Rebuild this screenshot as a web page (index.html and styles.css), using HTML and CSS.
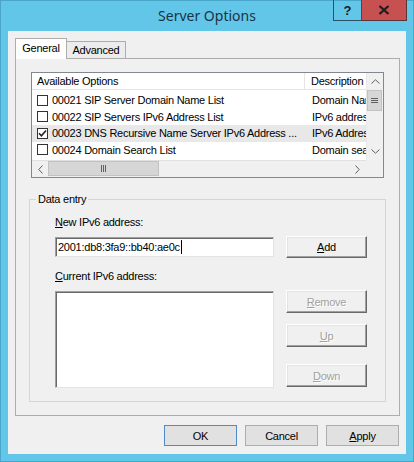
FILE: index.html
```html
<!DOCTYPE html>
<html>
<head>
<meta charset="utf-8">
<title>Server Options</title>
<link rel="stylesheet" href="styles.css">
</head>
<body>
<div class="window">
  <div class="titlebar">
    <div class="title">Server Options</div>
    <div class="controls">
      <div class="ctl help">?</div>
      <div class="ctl close">
        <svg width="12" height="10" viewBox="0 0 12 10"><path d="M1.5 1 L10.5 9 M10.5 1 L1.5 9" stroke="#1e1e1e" stroke-width="2.3" fill="none"/></svg>
      </div>
    </div>
  </div>
  <div class="client">
    <div class="tabs">
      <div class="tab active">General</div>
      <div class="tab">Advanced</div>
    </div>
    <div class="panel">
      <div class="listbox">
        <div class="list-main">
          <div class="list-view">
            <div class="header">
              <div class="hcol1">Available Options</div>
              <div class="hcol2">Description</div>
            </div>
            <div class="rows">
              <div class="row">
                <div class="c1"><span class="cb"></span><span class="txt">00021 SIP Server Domain Name List</span></div>
                <div class="c2">Domain Name List</div>
              </div>
              <div class="row">
                <div class="c1"><span class="cb"></span><span class="txt">00022 SIP Servers IPv6 Address List</span></div>
                <div class="c2">IPv6 address list</div>
              </div>
              <div class="row selected">
                <div class="c1"><span class="cb"><svg width="9" height="9" viewBox="0 0 9 9"><path d="M1 4.2 L3.4 6.8 L8 1.4" stroke="#222" stroke-width="1.6" fill="none"/></svg></span><span class="txt">00023 DNS Recursive Name Server IPv6 Address ...</span></div>
                <div class="c2">IPv6 Address list</div>
              </div>
              <div class="row">
                <div class="c1"><span class="cb"></span><span class="txt">00024 Domain Search List</span></div>
                <div class="c2">Domain search list</div>
              </div>
            </div>
          </div>
          <div class="vscroll">
            <div class="varrow">
              <svg width="9" height="5" viewBox="0 0 9 5"><path d="M0.5 4.5 L4.5 0.8 L8.5 4.5" stroke="#606060" stroke-width="1" fill="none"/></svg>
            </div>
            <div class="vthumb">
              <svg width="7" height="5" viewBox="0 0 7 5"><path d="M0 0.5 H7 M0 2.5 H7 M0 4.5 H7" stroke="#606060" stroke-width="1"/></svg>
            </div>
            <div class="track"></div>
            <div class="varrow">
              <svg width="9" height="5" viewBox="0 0 9 5"><path d="M0.5 0.5 L4.5 4.2 L8.5 0.5" stroke="#606060" stroke-width="1" fill="none"/></svg>
            </div>
          </div>
        </div>
        <div class="hbar-row">
          <div class="hscroll">
            <div class="harrow">
              <svg width="5" height="9" viewBox="0 0 5 9"><path d="M4.5 0.5 L0.8 4.5 L4.5 8.5" stroke="#606060" stroke-width="1" fill="none"/></svg>
            </div>
            <div class="hthumb">
              <svg width="5" height="7" viewBox="0 0 5 7"><path d="M0.5 0 V7 M2.5 0 V7 M4.5 0 V7" stroke="#606060" stroke-width="1"/></svg>
            </div>
            <div class="track"></div>
            <div class="harrow right">
              <svg width="5" height="9" viewBox="0 0 5 9"><path d="M0.5 0.5 L4.2 4.5 L0.5 8.5" stroke="#606060" stroke-width="1" fill="none"/></svg>
            </div>
          </div>
          <div class="corner"></div>
        </div>
      </div>

      <div class="group">
        <div class="legend">Data entry</div>
        <div class="lbl first"><u>N</u>ew IPv6 address:</div>
        <div class="inrow">
          <div class="input"><span>2001:db8:3fa9::bb40:ae0c</span><span class="caret"></span></div>
          <div class="cbtn"><u>A</u>dd</div>
        </div>
        <div class="lbl second"><u>C</u>urrent IPv6 address:</div>
        <div class="boxrow">
          <div class="curbox"></div>
          <div class="btncol">
            <div class="cbtn disabled"><u>R</u>emove</div>
            <div class="cbtn disabled up"><u>U</u>p</div>
            <div class="cbtn disabled down"><u>D</u>own</div>
          </div>
        </div>
      </div>
    </div>
    <div class="footer">
      <div class="btn default">OK</div>
      <div class="btn">Cancel</div>
      <div class="btn"><u>A</u>pply</div>
    </div>
  </div>
</div>
</body>
</html>
```
FILE: styles.css
```css
* { box-sizing: border-box; }
html, body { margin: 0; padding: 0; }
body {
  width: 414px;
  height: 462px;
  overflow: hidden;
  font-family: "Liberation Sans", Arial, sans-serif;
  font-size: 11px;
  letter-spacing: -0.25px;
  color: #000;
  background: #62c6e8;
}
u { text-decoration: underline; text-underline-offset: 1px; }

.window {
  width: 414px;
  height: 462px;
  background: #62c6e8;
  border: 1px solid #4aa6c9;
  padding: 0 7px 7px 7px;
  display: flex;
  flex-direction: column;
}

/* title bar */
.titlebar {
  height: 30px;
  flex: none;
  display: grid;
  grid-template-columns: 1fr auto 1fr;
}
.title {
  grid-column: 2;
  font-family: "Noto Sans", "Open Sans", sans-serif;
  font-size: 14px;
  letter-spacing: 0;
  line-height: 30px;
  color: #1c3346;
  padding-bottom: 1px;
}
.controls {
  grid-column: 3;
  justify-self: end;
  align-self: start;
  display: flex;
  margin-top: -1px;
  margin-right: -1px;
}
.ctl {
  height: 21px;
  display: flex;
  align-items: center;
  justify-content: center;
}
.help {
  width: 29px;
  border: 1px solid #2c5266;
  border-top: 0;
  font-weight: bold;
  font-size: 13px;
  letter-spacing: 0;
  color: #1a1a1a;
}
.close {
  width: 45px;
  background: #c75050;
  border: 1px solid #5c3434;
  border-top: 0;
  border-left: 0;
}

/* client area */
.client {
  flex: 1;
  background: #f0f0f0;
  display: flex;
  flex-direction: column;
}

.tabs {
  display: flex;
  align-items: flex-end;
  height: 21px;
  margin: 7px 0 -1px 7px;
  position: relative;
  z-index: 1;
}
.tab {
  height: 17px;
  margin-bottom: 1px;
  margin-left: -1px;
  width: 60px;
  border: 1px solid #adadad;
  border-bottom: 0;
  background: #ececec;
  text-align: center;
  line-height: 16px;
}
.tab.active {
  height: 21px;
  margin: 0;
  width: 52px;
  background: #fff;
  line-height: 19px;
}

.panel {
  margin-left: 7px;
  width: 385px;
  height: 358px;
  border: 1px solid #adadad;
  padding-top: 13px;
  display: flex;
  flex-direction: column;
}

/* list view */
.listbox {
  margin-left: 15px;
  width: 353px;
  height: 106px;
  border: 1px solid #828790;
  background: #fff;
  display: flex;
  flex-direction: column;
}
.list-main { height: 87px; display: flex; }
.list-view { width: 334px; overflow: hidden; }
.header {
  height: 17px;
  display: flex;
  border-bottom: 1px solid #e5e5e5;
  line-height: 16px;
  white-space: nowrap;
}
.hcol1 { width: 273px; flex: none; padding-left: 5px; border-right: 1px solid #e5e5e5; }
.hcol2 { padding-left: 6px; }
.rows { padding-top: 2px; }
.row {
  height: 16.5px;
  display: flex;
  align-items: center;
  white-space: nowrap;
}
.row.selected { background: #e8e8e8; }
.c1 {
  width: 273px;
  flex: none;
  display: flex;
  align-items: center;
  overflow: hidden;
  padding-left: 5px;
}
.cb {
  width: 11px;
  height: 11px;
  flex: none;
  border: 1px solid #333;
  background: #fff;
  display: flex;
  align-items: center;
  justify-content: center;
}
.txt { margin-left: 4px; }
.c2 { padding-left: 7px; flex: none; }

/* scrollbars */
.vscroll {
  width: 17px;
  background: #f0f0f0;
  border-left: 1px solid #e8e8e8;
  display: flex;
  flex-direction: column;
}
.varrow { height: 17px; flex: none; display: flex; align-items: center; justify-content: center; }
.vthumb {
  height: 21px;
  margin: 0 1px 0 0;
  background: #d6d6d6;
  border: 1px solid #c2c2c2;
  display: flex;
  align-items: center;
  justify-content: center;
}
.track { flex: 1; }
.hbar-row { height: 17px; display: flex; }
.hscroll {
  width: 334px;
  background: #f0f0f0;
  border-top: 1px solid #e0e0e0;
  display: flex;
}
.harrow { width: 16px; flex: none; display: flex; align-items: center; justify-content: center; }
.harrow.right { width: 17px; }
.hthumb {
  width: 111px;
  flex: none;
  margin-bottom: 1px;
  background: #d6d6d6;
  border: 1px solid #c2c2c2;
  display: flex;
  align-items: center;
  justify-content: center;
}
.corner { width: 17px; background: #f0f0f0; }

/* group box */
.group {
  margin: 21px 0 0 13px;
  width: 357px;
  border: 1px solid #d5d5d5;
  padding: 0 0 13px 25px;
}
.legend {
  width: fit-content;
  margin: -7px 0 0 -19px;
  padding: 0 2px;
  line-height: 13px;
  background: #f0f0f0;
}
.lbl { line-height: 13px; }
.lbl.first { margin-top: 10px; }
.lbl.second { margin-top: 12px; }
.inrow {
  display: flex;
  align-items: center;
  gap: 12px;
  height: 22px;
  margin-top: 7px;
}
.input, .curbox {
  width: 219px;
  background: #fff;
  border: 1px solid;
  border-color: #a0a0a0 #e3e3e3 #e3e3e3 #a0a0a0;
  box-shadow: inset 1px 1px 0 #696969;
}
.input {
  height: 20px;
  padding-left: 2px;
  display: flex;
  align-items: center;
}
.caret { width: 1px; height: 14px; background: #000; margin-left: 1px; }
.cbtn {
  width: 81px;
  height: 22px;
  background: #f0f0f0;
  border: 1px solid;
  border-color: #fff #696969 #696969 #fff;
  box-shadow: inset -1px -1px 0 #a0a0a0, inset 1px 1px 0 #e3e3e3;
  display: flex;
  align-items: center;
  justify-content: center;
}
.cbtn.disabled { height: 23px; color: #a0a0a0; text-shadow: 1px 1px 0 #fff; }
.boxrow { display: flex; gap: 12px; margin-top: 7px; }
.curbox { height: 97px; margin-top: 1px; }
.btncol { display: flex; flex-direction: column; }
.cbtn.up { margin-top: 11px; }
.cbtn.down { margin-top: 17px; }

/* footer buttons */
.footer {
  display: flex;
  justify-content: flex-end;
  gap: 8px;
  margin-top: 9px;
  padding-right: 7px;
}
.btn {
  width: 73px;
  height: 21px;
  background: #e1e1e1;
  border: 1px solid #adadad;
  display: flex;
  align-items: center;
  justify-content: center;
}
.btn.default { border-color: #4b8bc8; }
```
